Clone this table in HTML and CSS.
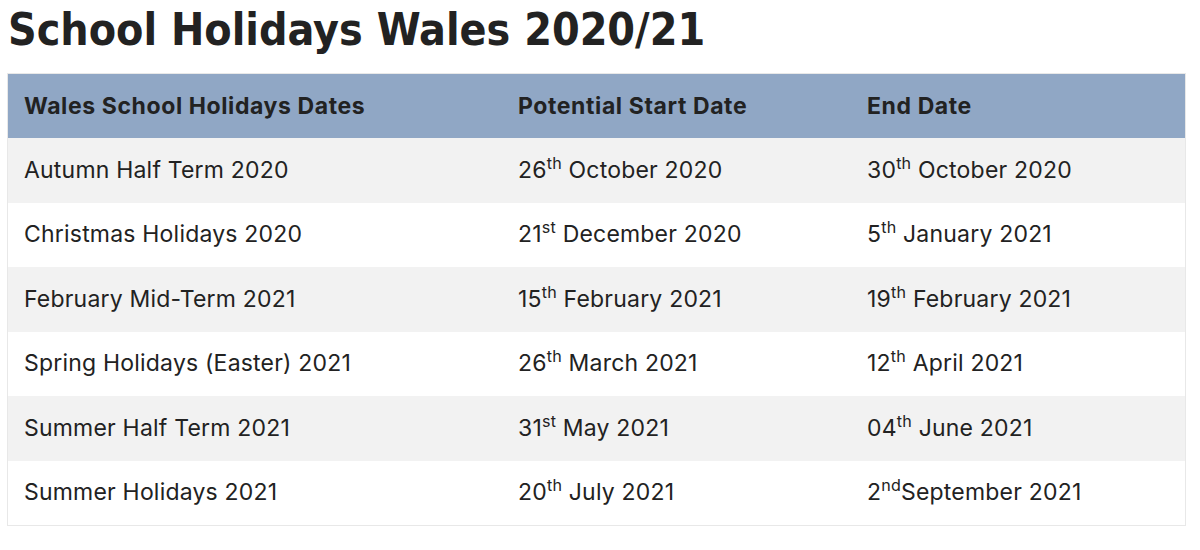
FILE: index.html
```html
<!DOCTYPE html>
<html>
<head>
<meta charset="utf-8">
<link rel="stylesheet" href="styles.css">
</head>
<body>
<h1 class="title">School Holidays Wales 2020/21</h1>
<table class="holidays">
  <thead>
    <tr><th class="c1">Wales School Holidays Dates</th><th class="c2">Potential Start Date</th><th class="c3">End Date</th></tr>
  </thead>
  <tbody>
    <tr><td>Autumn Half Term 2020</td><td>26<sup>th</sup> October 2020</td><td>30<sup>th</sup> October 2020</td></tr>
    <tr><td>Christmas Holidays 2020</td><td>21<sup>st</sup> December 2020</td><td>5<sup>th</sup> January 2021</td></tr>
    <tr><td>February Mid-Term 2021</td><td>15<sup>th</sup> February 2021</td><td>19<sup>th</sup> February 2021</td></tr>
    <tr><td>Spring Holidays (Easter) 2021</td><td>26<sup>th</sup> March 2021</td><td>12<sup>th</sup> April 2021</td></tr>
    <tr><td>Summer Half Term 2021</td><td>31<sup>st</sup> May 2021</td><td>04<sup>th</sup> June 2021</td></tr>
    <tr><td>Summer Holidays 2021</td><td>20<sup>th</sup> July 2021</td><td>2<sup>nd</sup>September 2021</td></tr>
  </tbody>
</table>
</body>
</html>
```
FILE: styles.css
```css
html, body { margin: 0; padding: 0; background: #fff; }
body { padding: 0 14px 0 7px; color: #222; }
.title {
  font-family: "DejaVu Sans", sans-serif;
  font-stretch: condensed;
  font-weight: bold;
  font-size: 44.3px;
  line-height: 60px;
  margin: 0 0 13px 1px;
  color: #222;
}
.holidays {
  width: 1179px;
  border-collapse: collapse;
  border: 1px solid #e8e8e8;
  font-family: Inter, "Noto Sans", sans-serif;
  font-size: 23px;
  letter-spacing: 0.2px;
  line-height: 28px;
  color: #222;
}
.holidays th, .holidays td {
  text-align: left;
  padding: 0 16px;
}
.holidays th {
  background: #90a7c5;
  font-weight: 700;
  font-size: 23px;
  letter-spacing: 0.6px;
  color: #222;
  height: 64px;
}
.holidays td { height: 63.5px; padding-bottom: 1px; }
.c1 { width: 462px; }
.c2 { width: 317px; }
.holidays tbody tr:nth-child(odd) { background: #f2f2f2; }
.holidays tbody tr:nth-child(even) { background: #fff; }
.holidays sup { font-size: 0.7em; line-height: 0; vertical-align: 0.55em; }
```
